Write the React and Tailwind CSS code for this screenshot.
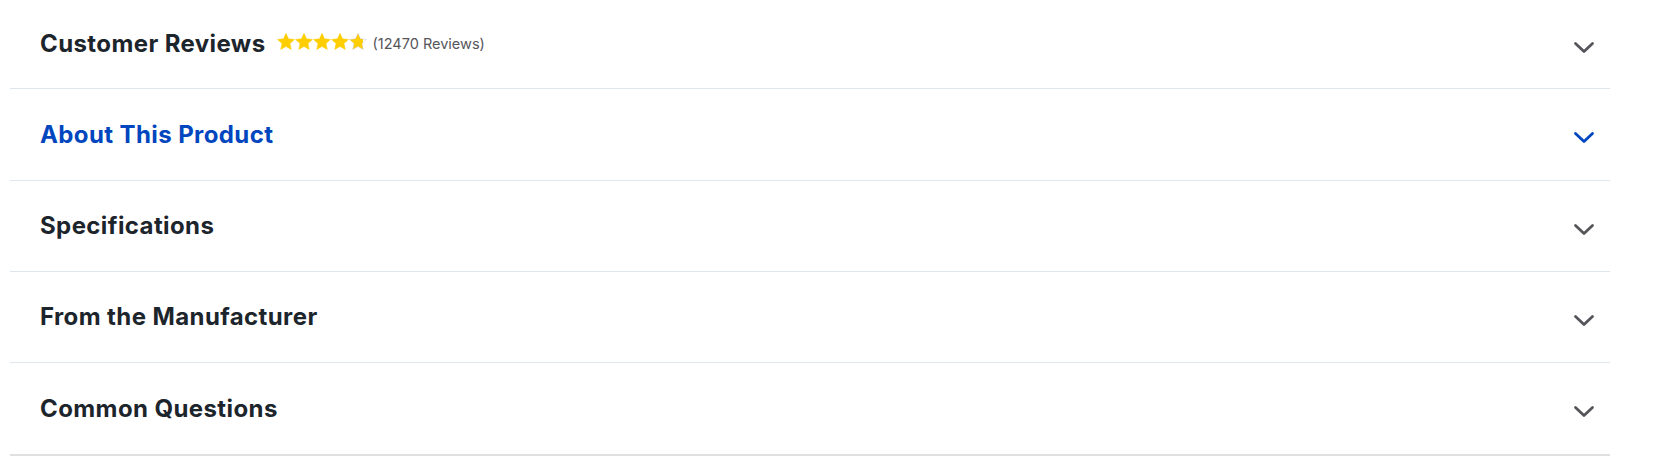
const sections = [
  { title: 'About This Product', active: true, h: 'h-[92px]' },
  { title: 'Specifications', h: 'h-[91px]' },
  { title: 'From the Manufacturer', h: 'h-[91px]' },
  { title: 'Common Questions', h: 'h-[91px]', last: true }
]

function Chevron({ active }) {
  return (
    <svg
      width="22"
      height="13"
      viewBox="0 0 22 13"
      fill="none"
      className="mt-[6px]"
    >
      <path
        d="M2.5 2.5l8.5 8 8.5-8"
        stroke={active ? '#0046be' : '#55555a'}
        strokeWidth="2.8"
        strokeLinecap="round"
        strokeLinejoin="round"
      />
    </svg>
  )
}

function Star({ fill = 1, id }) {
  return (
    <svg width="18" height="17" viewBox="1 1 22 21">
      <defs>
        <linearGradient id={id}>
          <stop offset={fill} stopColor="#ffce00" />
          <stop offset={fill} stopColor="#ffffff" />
        </linearGradient>
      </defs>
      <path
        d="M12 1.4l3.1 6.8 7.4.8-5.6 5 1.6 7.3L12 17.6l-6.5 3.7 1.6-7.3-5.6-5 7.4-.8z"
        fill={`url(#${id})`}
        stroke={fill < 1 ? '#c8c8c8' : '#ffce00'}
        strokeWidth="0.6"
        strokeLinejoin="round"
      />
    </svg>
  )
}

export default function App() {
  return (
    <div
      className="w-[1676px] h-[459px] bg-white"
      style={{ fontFamily: 'Inter, "Noto Sans", sans-serif' }}
    >
      <div className="ml-[10px] w-[1600px] border-b-2 border-[#e0e0e0]">

        <div className="h-[89px] flex items-center justify-between pl-[30px] pr-[15px] border-b border-[#e0e6ef]">
          <div className="flex items-center">
            <h2 className="text-[24px] font-bold text-[#1d252c] tracking-[0.4px]">
              Customer Reviews
            </h2>
            <div className="flex ml-[11px] -mt-[5px]">
              <Star id="s1" />
              <Star id="s2" />
              <Star id="s3" />
              <Star id="s4" />
              <Star id="s5" fill={0.82} />
            </div>
            <span className="ml-[6px] text-[14.5px] text-[#55555a]">
              (12470 Reviews)
            </span>
          </div>
          <Chevron />
        </div>

        {sections.map((s) => (
          <div
            key={s.title}
            className={
              s.h +
              (s.last
                ? ' flex items-center justify-between pl-[30px] pr-[15px]'
                : ' flex items-center justify-between pl-[30px] pr-[15px] border-b border-[#e0e6ef]')
            }
          >
            <h2
              className={
                s.active
                  ? 'text-[24px] font-bold text-[#0046be] tracking-[0.4px]'
                  : 'text-[24px] font-bold text-[#1d252c] tracking-[0.4px]'
              }
            >
              {s.title}
            </h2>
            <Chevron active={s.active} />
          </div>
        ))}

      </div>
    </div>
  )
}
